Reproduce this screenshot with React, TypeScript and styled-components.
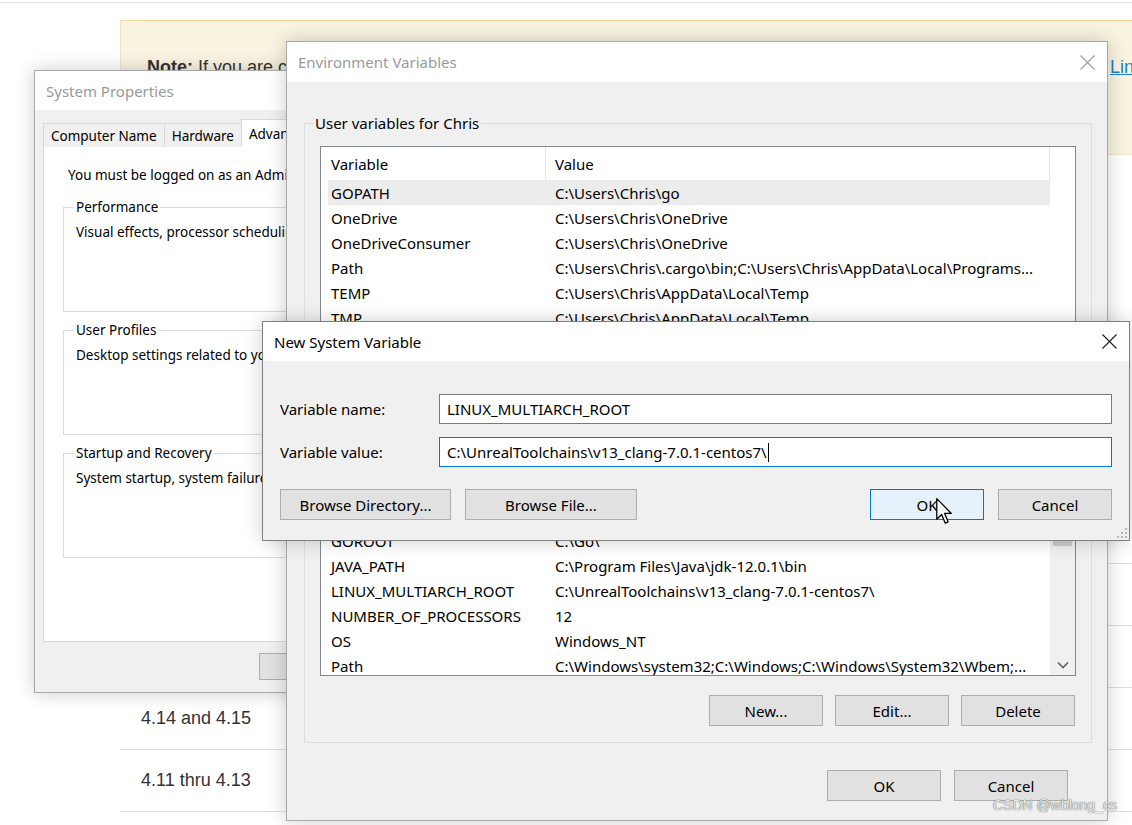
import React from 'react'
import styled, { createGlobalStyle } from 'styled-components'

const GlobalStyle = createGlobalStyle`
  html, body {
    margin: 0;
    padding: 0;
    background: #fff;
  }
  body {
    width: 1132px;
    height: 825px;
    overflow: hidden;
  }
  * {
    box-sizing: border-box;
  }
`

const Screen = styled.div`
  position: relative;
  width: 1132px;
  height: 825px;
  overflow: hidden;
  background: #fff;
`

/* ---------- web page behind the dialogs ---------- */

const Page = styled.div`
  margin-top: 2px;
  border-top: 1px solid #e2e2e2;
  padding-left: 120px;
  font-family: 'Liberation Sans', Arial, sans-serif;
  color: #333;
`

const NoteBox = styled.div`
  margin-top: 17px;
  height: 135px;
  background: #f9f4e0;
  border-top: 1px solid #f1d69c;
  border-left: 1px solid #efe4c4;
  border-bottom: 1px solid #ece5cf;
  padding: 35px 0 0 26px;
  display: flex;
  gap: 6px;
  font-size: 18px;
  line-height: 22px;
  white-space: nowrap;
`

const NoteText = styled.span`
  width: 957px;
  overflow: hidden;
  flex: none;
`

const NoteLink = styled.a`
  color: #1a7fd4;
  text-decoration: underline;
`

const VersionTable = styled.div`
  margin-top: 347px;
  display: flex;
  flex-direction: column;
`

const VersionRow = styled.div`
  height: 62px;
  border-bottom: 1px solid #dedede;
  display: flex;
  align-items: center;
  padding-left: 21px;
  font-size: 18px;
`

/* ---------- windows ---------- */

const Window = styled.div<{ $x: number; $y: number; $w: number; $h: number; $z: number; $active?: boolean }>`
  position: absolute;
  left: ${(p) => p.$x}px;
  top: ${(p) => p.$y}px;
  width: ${(p) => p.$w}px;
  height: ${(p) => p.$h}px;
  z-index: ${(p) => p.$z};
  background: #f0f0f0;
  border: 1px solid ${(p) => (p.$active ? '#7f7f7f' : '#a9a9a9')};
  box-shadow: 0 0 18px rgba(0, 0, 0, 0.2);
  display: flex;
  flex-direction: column;
  font-family: 'Noto Sans', sans-serif;
  color: #000;
`

const TitleBar = styled.div<{ $active?: boolean; $h: number }>`
  flex: none;
  height: ${(p) => p.$h}px;
  background: #fff;
  display: flex;
  align-items: center;
  justify-content: space-between;
  padding: 0 12px 0 11px;
  font-size: 15px;
  color: ${(p) => (p.$active ? '#000' : '#9a9a9a')};
`

const CloseGlyph = styled.svg<{ $active?: boolean }>`
  width: 15px;
  height: 15px;
  stroke: ${(p) => (p.$active ? '#1a1a1a' : '#9a9a9a')};
  stroke-width: 1.1;
`

const CloseIcon: React.FC<{ active?: boolean }> = ({ active }) => (
  <CloseGlyph $active={active} viewBox="0 0 15 15">
    <path d="M0.5 0.5 L14.5 14.5 M14.5 0.5 L0.5 14.5" fill="none" />
  </CloseGlyph>
)

const Button = styled.div<{ $w: number; $h?: number; $focused?: boolean; $small?: boolean }>`
  flex: none;
  width: ${(p) => p.$w}px;
  height: ${(p) => p.$h ?? 31}px;
  background: ${(p) => (p.$focused ? '#e5f1fb' : '#e1e1e1')};
  border: 1px solid ${(p) => (p.$focused ? '#0078d7' : '#adadad')};
  display: flex;
  align-items: center;
  justify-content: center;
  font-size: ${(p) => (p.$small ? 13.5 : 15)}px;
  color: #000;
`

const Group = styled.fieldset<{ $h: number; $small?: boolean }>`
  flex: none;
  margin: 0;
  padding: 0 ${(p) => (p.$small ? 12 : 15)}px;
  min-width: 0;
  height: ${(p) => p.$h}px;
  border: 1px solid #dcdcdc;
  display: flex;
  flex-direction: column;
`

const Legend = styled.legend<{ $small?: boolean }>`
  padding: 0 2px;
  margin-left: ${(p) => (p.$small ? -2 : -7)}px;
  font-size: ${(p) => (p.$small ? 13.5 : 15)}px;
  line-height: ${(p) => (p.$small ? 18 : 20)}px;
`

/* ---------- System Properties ---------- */

const SysBody = styled.div`
  flex: 1;
  display: flex;
  flex-direction: column;
  padding: 10px 0 0 8px;
  font-size: 13.5px;
`

const TabStrip = styled.div`
  flex: none;
  height: 27px;
  display: flex;
  align-items: flex-end;
  padding-left: 1px;
  position: relative;
  z-index: 1;
`

const Tab = styled.div<{ $selected?: boolean }>`
  height: ${(p) => (p.$selected ? 28 : 24)}px;
  padding: 0 7px;
  display: flex;
  align-items: center;
  background: ${(p) => (p.$selected ? '#fff' : '#f0f0f0')};
  border: 1px solid #d9d9d9;
  border-bottom: none;
  margin-left: -1px;
  white-space: nowrap;
`

const TabPanel = styled.div`
  flex: none;
  height: 496px;
  margin-top: -1px;
  background: #fff;
  border: 1px solid #d9d9d9;
  padding: 19px 10px 0 19px;
  display: flex;
  flex-direction: column;
  gap: 9px;
`

const PanelIntro = styled.div`
  padding-left: 5px;
  line-height: 18px;
  white-space: nowrap;
  overflow: hidden;
  margin-bottom: 5px;
`

const GroupText = styled.div`
  margin-top: 7px;
  line-height: 18px;
  white-space: nowrap;
`

const SysButtons = styled.div`
  display: flex;
  justify-content: flex-end;
  gap: 7px;
  padding: 11px 10px 0 0;
`

/* ---------- Environment Variables ---------- */

const EnvBody = styled.div`
  flex: 1;
  display: flex;
  flex-direction: column;
  padding: 31px 15px 18px 17px;
  font-size: 15px;
`

const ListView = styled.div<{ $h: number }>`
  flex: none;
  margin-top: 13px;
  height: ${(p) => p.$h}px;
  border: 1px solid #828790;
  background: #fff;
  display: flex;
`

const ListMain = styled.div`
  flex: 1;
  min-width: 0;
  display: flex;
  flex-direction: column;
  overflow: hidden;
`

const ListHeader = styled.div`
  flex: none;
  height: 33px;
  margin-left: 7px;
  display: flex;
`

const HeaderCell = styled.div<{ $first?: boolean }>`
  ${(p) => (p.$first ? 'width: 218px; padding-left: 3px;' : 'flex: 1; padding-left: 9px;')}
  display: flex;
  align-items: center;
  border-right: 1px solid #e5e5e5;
`

const RowsViewport = styled.div`
  flex: 1;
  overflow: hidden;
`

const Rows = styled.div<{ $scroll: number }>`
  margin-top: -${(p) => p.$scroll}px;
`

const Row = styled.div<{ $selected?: boolean }>`
  height: 25px;
  margin-left: 7px;
  display: flex;
  align-items: center;
  background: ${(p) => (p.$selected ? '#ececec' : 'transparent')};
  white-space: nowrap;
`

const NameCell = styled.div`
  width: 218px;
  flex: none;
  padding-left: 3px;
  overflow: hidden;
`

const ValueCell = styled.div`
  flex: 1;
  min-width: 0;
  padding-left: 9px;
  overflow: hidden;
`

const Gutter = styled.div<{ $bar?: boolean }>`
  flex: none;
  width: 25px;
  background: ${(p) => (p.$bar ? '#f0f0f0' : '#fff')};
  display: flex;
  flex-direction: column;
  align-items: center;
`

const Thumb = styled.div`
  width: 19px;
  height: 81px;
  margin-top: 1px;
  background: #cdcdcd;
`

const ArrowGlyph = styled.svg`
  margin-top: auto;
  margin-bottom: 6px;
  width: 12px;
  height: 8px;
`

const GroupButtons = styled.div`
  display: flex;
  justify-content: flex-end;
  gap: 12px;
  margin-top: 19px;
  padding-right: 1px;
`

const EnvFooter = styled.div`
  display: flex;
  justify-content: flex-end;
  gap: 13px;
  margin-top: 27px;
  padding-right: 24px;
`

/* ---------- New System Variable ---------- */

const NewBody = styled.div`
  flex: 1;
  display: flex;
  flex-direction: column;
  padding: 33px 17px 0 17px;
  font-size: 15px;
  position: relative;
`

const FieldRow = styled.div`
  display: flex;
  align-items: center;
  margin-bottom: 13px;
`

const FieldLabel = styled.div`
  width: 159px;
  flex: none;
`

const TextBox = styled.div<{ $focused?: boolean }>`
  flex: 1;
  height: 30px;
  background: #fff;
  border: 1px solid ${(p) => (p.$focused ? '#0078d7' : '#7a7a7a')};
  display: flex;
  align-items: center;
  padding-left: 7px;
  white-space: nowrap;
`

const Caret = styled.span`
  display: inline-block;
  width: 1px;
  height: 19px;
  background: #000;
  margin-left: 1px;
`

const NewButtons = styled.div`
  display: flex;
  gap: 14px;
  margin-top: 9px;
`

const Spacer = styled.div`
  flex: 1;
`

const Grip = styled.svg`
  position: absolute;
  right: 2px;
  bottom: 2px;
  width: 10px;
  height: 10px;
`

const Pointer = styled.svg`
  position: absolute;
  left: 936px;
  top: 498px;
  width: 17px;
  height: 27px;
  z-index: 10;
`

const Watermark = styled.div`
  position: absolute;
  left: 993px;
  top: 797px;
  z-index: 11;
  font-family: 'Liberation Sans', Arial, sans-serif;
  font-size: 14px;
  color: #ececec;
  text-shadow: 0 0 1px #666, 0 0 1px #666;
`

const userVars = [
  ['GOPATH', 'C:\\Users\\Chris\\go'],
  ['OneDrive', 'C:\\Users\\Chris\\OneDrive'],
  ['OneDriveConsumer', 'C:\\Users\\Chris\\OneDrive'],
  ['Path', 'C:\\Users\\Chris\\.cargo\\bin;C:\\Users\\Chris\\AppData\\Local\\Programs...'],
  ['TEMP', 'C:\\Users\\Chris\\AppData\\Local\\Temp'],
  ['TMP', 'C:\\Users\\Chris\\AppData\\Local\\Temp'],
  ['VULKAN_SDK', 'C:\\VulkanSDK\\1.1.106.0'],
]

const systemVars = [
  ['ComSpec', 'C:\\Windows\\system32\\cmd.exe'],
  ['DriverData', 'C:\\Windows\\System32\\Drivers\\DriverData'],
  ['GOROOT', 'C:\\Go\\'],
  ['JAVA_PATH', 'C:\\Program Files\\Java\\jdk-12.0.1\\bin'],
  ['LINUX_MULTIARCH_ROOT', 'C:\\UnrealToolchains\\v13_clang-7.0.1-centos7\\'],
  ['NUMBER_OF_PROCESSORS', '12'],
  ['OS', 'Windows_NT'],
  ['Path', 'C:\\Windows\\system32;C:\\Windows;C:\\Windows\\System32\\Wbem;...'],
  ['PATHEXT', '.COM;.EXE;.BAT;.CMD;.VBS;.VBE;.JS;.JSE;.WSF;.WSH;.MSC'],
]

const versions = ['4.21 and 4.22', '4.19 and 4.20', '4.16 thru 4.18', '4.14 and 4.15', '4.11 thru 4.13']

const VarList: React.FC<{ vars: string[][]; height: number; scroll?: number; selected?: number; scrollbar?: boolean }> = ({
  vars,
  height,
  scroll = 0,
  selected = -1,
  scrollbar,
}) => (
  <ListView $h={height}>
    <ListMain>
      <ListHeader>
        <HeaderCell $first>Variable</HeaderCell>
        <HeaderCell>Value</HeaderCell>
      </ListHeader>
      <RowsViewport>
        <Rows $scroll={scroll}>
          {vars.map(([name, value], i) => (
            <Row key={name + i} $selected={i === selected}>
              <NameCell>{name}</NameCell>
              <ValueCell>{value}</ValueCell>
            </Row>
          ))}
        </Rows>
      </RowsViewport>
    </ListMain>
    <Gutter $bar={scrollbar}>
      {scrollbar && (
        <>
          <Thumb />
          <ArrowGlyph viewBox="0 0 12 8">
            <path d="M1 1.5 L6 6.5 L11 1.5" fill="none" stroke="#606060" strokeWidth="1.6" />
          </ArrowGlyph>
        </>
      )}
    </Gutter>
  </ListView>
)

const App: React.FC = () => (
  <Screen>
    <GlobalStyle />
    <Page>
      <NoteBox>
        <NoteText>
          <b>Note:</b> If you are cross-compiling for Linux, the toolchain must match the engine version you are
          building, as listed in the table below. For more details, see the
        </NoteText>
        <NoteLink>Linux</NoteLink>
      </NoteBox>
      <VersionTable>
        {versions.map((v) => (
          <VersionRow key={v}>{v}</VersionRow>
        ))}
      </VersionTable>
    </Page>

    <Window $x={34} $y={70} $w={514} $h={623} $z={1}>
      <TitleBar $h={39}>System Properties</TitleBar>
      <SysBody>
        <TabStrip>
          <Tab>Computer Name</Tab>
          <Tab>Hardware</Tab>
          <Tab $selected>Advanced</Tab>
          <Tab>System Protection</Tab>
          <Tab>Remote</Tab>
        </TabStrip>
        <TabPanel>
          <PanelIntro>You must be logged on as an Administrator to make most of these changes.</PanelIntro>
          <Group $h={114} $small>
            <Legend $small>Performance</Legend>
            <GroupText>Visual effects, processor scheduling, memory usage, and virtual memory</GroupText>
          </Group>
          <Group $h={114} $small>
            <Legend $small>User Profiles</Legend>
            <GroupText>Desktop settings related to your sign-in</GroupText>
          </Group>
          <Group $h={114} $small>
            <Legend $small>Startup and Recovery</Legend>
            <GroupText>System startup, system failure, and debugging information</GroupText>
          </Group>
        </TabPanel>
        <SysButtons>
          <Button $w={88} $h={27} $small>OK</Button>
          <Button $w={88} $h={27} $small>Cancel</Button>
          <Button $w={88} $h={27} $small>Apply</Button>
        </SysButtons>
      </SysBody>
    </Window>

    <Window $x={286} $y={41} $w={822} $h={780} $z={2}>
      <TitleBar $h={40}>
        Environment Variables
        <CloseIcon />
      </TitleBar>
      <EnvBody>
        <Group $h={307}>
          <Legend>User variables for Chris</Legend>
          <VarList vars={userVars} height={214} selected={0} />
          <GroupButtons>
            <Button $w={114}>New...</Button>
            <Button $w={114}>Edit...</Button>
            <Button $w={114}>Delete</Button>
          </GroupButtons>
        </Group>
        <Group $h={313} style={{ marginTop: 10 }}>
          <Legend>System variables</Legend>
          <VarList vars={systemVars} height={213} scroll={19} scrollbar />
          <GroupButtons>
            <Button $w={114}>New...</Button>
            <Button $w={114}>Edit...</Button>
            <Button $w={114}>Delete</Button>
          </GroupButtons>
        </Group>
        <EnvFooter>
          <Button $w={114}>OK</Button>
          <Button $w={114}>Cancel</Button>
        </EnvFooter>
      </EnvBody>
    </Window>

    <Window $x={262} $y={321} $w={868} $h={220} $z={3} $active>
      <TitleBar $h={39} $active>
        New System Variable
        <CloseIcon active />
      </TitleBar>
      <NewBody>
        <FieldRow>
          <FieldLabel>Variable name:</FieldLabel>
          <TextBox>LINUX_MULTIARCH_ROOT</TextBox>
        </FieldRow>
        <FieldRow>
          <FieldLabel>Variable value:</FieldLabel>
          <TextBox $focused>
            C:\UnrealToolchains\v13_clang-7.0.1-centos7\
            <Caret />
          </TextBox>
        </FieldRow>
        <NewButtons>
          <Button $w={171}>Browse Directory...</Button>
          <Button $w={172}>Browse File...</Button>
          <Spacer />
          <Button $w={114} $focused>OK</Button>
          <Button $w={114}>Cancel</Button>
        </NewButtons>
        <Grip viewBox="0 0 10 10">
          <rect x="8" y="0" width="2" height="2" fill="#b5b5b5" />
          <rect x="4" y="4" width="2" height="2" fill="#b5b5b5" />
          <rect x="8" y="4" width="2" height="2" fill="#b5b5b5" />
          <rect x="0" y="8" width="2" height="2" fill="#b5b5b5" />
          <rect x="4" y="8" width="2" height="2" fill="#b5b5b5" />
          <rect x="8" y="8" width="2" height="2" fill="#b5b5b5" />
        </Grip>
      </NewBody>
    </Window>

    <Pointer viewBox="0 0 13 21">
      <path d="M0.5 0.5 L0.5 16.5 L4.3 12.8 L7 19.5 L9.3 18.5 L6.6 12 L11.8 12 Z" fill="#fff" stroke="#000" strokeWidth="1" strokeLinejoin="round" />
    </Pointer>

    <Watermark>CSDN @wblong_cs</Watermark>
  </Screen>
)

export default App
